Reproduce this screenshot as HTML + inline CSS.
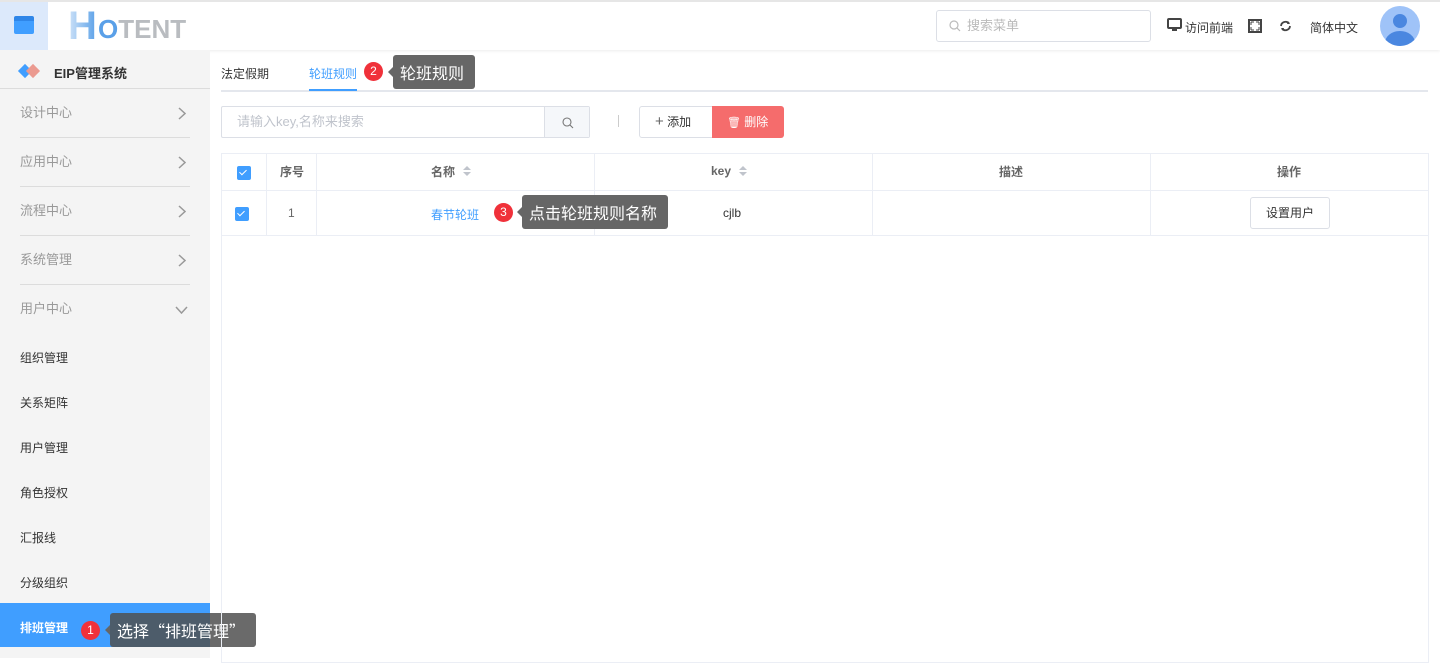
<!DOCTYPE html>
<html><head><meta charset="utf-8"><style>
*{box-sizing:border-box;margin:0;padding:0}
body{width:1440px;height:658px;overflow:hidden;background:#fff;font-family:"Liberation Sans","Noto Sans CJK SC",sans-serif;font-size:12px;color:#333;position:relative}
.abs{position:absolute}
.top{left:0;top:0;width:1440px;height:50px;border-top:2px solid #e6e6e6;background:#fff;box-shadow:0 1px 3px rgba(0,0,0,.08)}
.side{left:0;top:50px;width:210px;height:608px;background:#f4f4f4}
.mi{position:absolute;left:20px;width:170px;height:49px;border-bottom:1px solid #dcdcdc;color:#999;font-size:13px;line-height:47px}
.mi svg{position:absolute;right:4px;top:18px}
.si{position:absolute;left:20px;font-size:12px;color:#333}
.tip{position:absolute;background:#666;color:#fff;font-size:16px;border-radius:3px;height:34px;line-height:34px;padding:0 7px;font-family:"Noto Sans CJK SC",sans-serif}
.tip:before{content:"";position:absolute;left:-5px;top:12px;border:5px solid transparent;border-left:0;border-right-color:#666}
.dot{position:absolute;width:19px;height:19px;border-radius:50%;background:#f0313a;color:#fff;font-size:12px;text-align:center;line-height:19px}
.cb{position:absolute;width:14px;height:14px;background:#409eff;border-radius:2px}
.cb:after{content:"";position:absolute;left:4px;top:2px;width:3px;height:6px;border:solid #fff;border-width:0 1.5px 1.5px 0;transform:rotate(45deg)}
.th{position:absolute;top:163px;font-weight:bold;color:#666;font-size:12px;display:flex;align-items:center;height:16px}
.vl{position:absolute;top:154px;width:1px;height:82px;background:#ebeef5}
.sort{display:inline-block;margin-left:8px;width:8px;height:12px;position:relative}
.sort:before,.sort:after{content:"";position:absolute;left:0;border:4px solid transparent}
.sort:before{top:-3px;border-bottom-color:#c0c4cc}
.sort:after{top:7px;border-top-color:#c0c4cc}
</style></head><body>
<div class="abs top">
 <div class="abs" style="left:0;top:0;width:48px;height:48px;background:#dce9fb"><div class="abs" style="left:14px;top:14px;width:20px;height:18px;background:#409eff;border-radius:2px;border-top:5px solid #2f86e8"></div></div>
 <div class="abs" style="left:68px;top:4px;font-size:40px;font-weight:bold;background:linear-gradient(90deg,#cfe3f8,#5aa0e8);-webkit-background-clip:text;color:transparent;line-height:40px">H</div>
 <div class="abs" style="left:98px;top:12px;font-size:26px;font-weight:bold;color:#b9bcc0;letter-spacing:0px;line-height:30px"><span style="color:#5aa0e8">O</span>TENT</div>
 <div class="abs" style="left:936px;top:8px;width:215px;height:32px;border:1px solid #dcdfe6;border-radius:3px;color:#bbb;font-size:13px;line-height:30px;padding-left:30px">搜索菜单
  <svg class="abs" style="left:12px;top:9px" width="12" height="12" viewBox="0 0 12 12"><circle cx="5" cy="5" r="4" fill="none" stroke="#bbb" stroke-width="1.2"/><path d="M8 8l3 3" stroke="#bbb" stroke-width="1.2"/></svg></div>
 <svg class="abs" style="left:1167px;top:16px" width="15" height="14" viewBox="0 0 15 14"><rect x="1" y="1" width="13" height="9" rx="1" fill="none" stroke="#444" stroke-width="2"/><rect x="5" y="11" width="5" height="2" fill="#444"/></svg>
 <div class="abs" style="left:1185px;top:17px;font-size:12px;color:#333">访问前端</div>
 <svg class="abs" style="left:1248px;top:17px" width="14" height="14" viewBox="0 0 14 14"><rect x="1" y="1" width="12" height="12" fill="none" stroke="#444" stroke-width="2"/><path d="M3 3h3M3 3v3M11 3h-3M11 3v3M3 11h3M3 11v-3M11 11h-3M11 11v-3" stroke="#444" stroke-width="1"/></svg>
 <svg class="abs" style="left:1279px;top:18px" width="13" height="12" viewBox="0 0 13 12"><path d="M2 6a4.5 4.5 0 0 1 8-2.5M11 6a4.5 4.5 0 0 1-8 2.5" fill="none" stroke="#444" stroke-width="1.8"/><path d="M9 1l2 3-3 0z M4 11l-2-3 3 0z" fill="#444"/></svg>
 <div class="abs" style="left:1310px;top:17px;font-size:12px;color:#333">简体中文</div>
 <div class="abs" style="left:1380px;top:4px;width:40px;height:40px;border-radius:50%;background:#9fc3f8;overflow:hidden"><div class="abs" style="left:13px;top:8px;width:14px;height:14px;border-radius:50%;background:#4a87e0"></div><div class="abs" style="left:5px;top:25px;width:30px;height:24px;border-radius:50%;background:#4a87e0"></div></div>
</div>
<div class="abs side">
 <div class="abs" style="left:20px;top:16px;width:10px;height:10px;background:#409eff;transform:rotate(45deg)"></div>
 <div class="abs" style="left:28px;top:16px;width:10px;height:10px;background:#eb9a90;transform:rotate(45deg)"></div>
 <div class="abs" style="left:54px;top:13px;font-size:13px;font-weight:bold;color:#333">EIP管理系统</div>
 <div class="abs" style="left:0;top:38px;width:210px;height:1px;background:#dcdcdc"></div>
 <div class="mi" style="top:39px">设计中心<svg width="8" height="13" viewBox="0 0 8 13"><path d="M1 1l6 5.5L1 12" fill="none" stroke="#999" stroke-width="1.5"/></svg></div>
 <div class="mi" style="top:88px">应用中心<svg width="8" height="13" viewBox="0 0 8 13"><path d="M1 1l6 5.5L1 12" fill="none" stroke="#999" stroke-width="1.5"/></svg></div>
 <div class="mi" style="top:137px">流程中心<svg width="8" height="13" viewBox="0 0 8 13"><path d="M1 1l6 5.5L1 12" fill="none" stroke="#999" stroke-width="1.5"/></svg></div>
 <div class="mi" style="top:186px">系统管理<svg width="8" height="13" viewBox="0 0 8 13"><path d="M1 1l6 5.5L1 12" fill="none" stroke="#999" stroke-width="1.5"/></svg></div>
 <div class="mi" style="top:235px;border:0">用户中心<svg width="13" height="8" viewBox="0 0 13 8" style="top:21px;right:2px"><path d="M1 1l5.5 6L12 1" fill="none" stroke="#999" stroke-width="1.5"/></svg></div>
 <div class="si" style="top:299px">组织管理</div>
 <div class="si" style="top:344px">关系矩阵</div>
 <div class="si" style="top:389px">用户管理</div>
 <div class="si" style="top:434px">角色授权</div>
 <div class="si" style="top:479px">汇报线</div>
 <div class="si" style="top:524px">分级组织</div>
 <div class="abs" style="left:0;top:553px;width:210px;height:44px;background:#409eff"></div>
 <div class="si" style="top:569px;color:#fff;font-weight:bold">排班管理</div>
</div>
<div class="dot" style="left:81px;top:621px">1</div>
<div class="tip" style="left:110px;top:613px;width:146px;background:rgba(80,80,80,.85)">选择“排班管理”</div>

<div class="abs" style="left:221px;top:65px;font-size:12px;color:#333">法定假期</div>
<div class="abs" style="left:309px;top:65px;font-size:12px;color:#409eff">轮班规则</div>
<div class="abs" style="left:221px;top:90px;width:1207px;height:2px;background:#e4e7ed"></div>
<div class="abs" style="left:309px;top:89px;width:48px;height:2px;background:#409eff"></div>
<div class="dot" style="left:364px;top:62px">2</div>
<div class="tip" style="left:393px;top:55px;width:82px">轮班规则</div>

<div class="abs" style="left:221px;top:106px;width:369px;height:32px;border:1px solid #dcdfe6;border-radius:2px;color:#c0c4cc;font-size:13px;line-height:30px;padding-left:15px">请输入key,名称来搜索</div>
<div class="abs" style="left:544px;top:107px;width:45px;height:30px;background:#f5f7fa;border-left:1px solid #dcdfe6"><svg class="abs" style="left:17px;top:10px" width="12" height="12" viewBox="0 0 12 12"><circle cx="5" cy="5" r="4" fill="none" stroke="#777" stroke-width="1.1"/><path d="M8 8l3 3" stroke="#777" stroke-width="1.1"/></svg></div>
<div class="abs" style="left:618px;top:115px;width:1px;height:12px;background:#ccc"></div>
<div class="abs" style="left:639px;top:106px;width:74px;height:32px;border:1px solid #dcdfe6;border-radius:3px 0 0 3px;font-size:12px;line-height:30px;padding-left:15px;color:#333"><span style="font-size:15px;color:#666">+</span> 添加</div>
<div class="abs" style="left:712px;top:106px;width:72px;height:32px;background:#f56c6c;border-radius:0 3px 3px 0;color:#fff;font-size:12px;line-height:32px;padding-left:15px"><span style="font-size:11px">🗑</span> 删除</div>

<div class="abs" style="left:221px;top:153px;width:1208px;height:510px;border:1px solid #ebeef5"></div>
<div class="abs" style="left:222px;top:190px;width:1206px;height:1px;background:#ebeef5"></div>
<div class="abs" style="left:222px;top:235px;width:1206px;height:1px;background:#ebeef5"></div>
<div class="vl" style="left:266px"></div><div class="vl" style="left:316px"></div><div class="vl" style="left:594px"></div><div class="vl" style="left:872px"></div><div class="vl" style="left:1150px"></div>
<div class="cb" style="left:237px;top:166px"></div>
<div class="th" style="left:280px">序号</div>
<div class="th" style="left:431px">名称<span class="sort"></span></div>
<div class="th" style="left:711px">key<span class="sort"></span></div>
<div class="th" style="left:999px">描述</div>
<div class="th" style="left:1277px">操作</div>
<div class="cb" style="left:235px;top:207px"></div>
<div class="abs" style="left:288px;top:206px;color:#666">1</div>
<div class="abs" style="left:431px;top:206px;color:#409eff">春节轮班</div>
<div class="abs" style="left:723px;top:206px;color:#333">cjlb</div>
<div class="abs" style="left:1250px;top:197px;width:80px;height:32px;border:1px solid #dcdfe6;border-radius:3px;text-align:center;line-height:30px;color:#333">设置用户</div>
<div class="dot" style="left:494px;top:203px">3</div>
<div class="tip" style="left:522px;top:195px;width:146px">点击轮班规则名称</div>
</body></html>
